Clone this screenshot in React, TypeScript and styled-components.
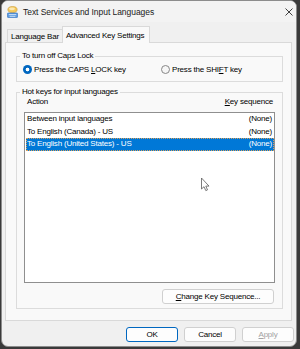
import React from "react";
import styled, { createGlobalStyle } from "styled-components";

const Global = createGlobalStyle`
  html, body { margin: 0; padding: 0; }
  body {
    width: 300px;
    height: 349px;
    overflow: hidden;
    background: #3a3a3a;
    font-family: "Liberation Sans", Arial, sans-serif;
    font-size: 8px;
    letter-spacing: -0.2px;
    color: #000;
  }
`;

const Window = styled.div`
  position: relative;
  box-sizing: border-box;
  margin-left: 1px;
  width: 296px;
  height: 347px;
  background: #f0f0f0;
  border: 1px solid #8c8c8c;
  border-radius: 7px;
  display: flex;
  flex-direction: column;
  overflow: hidden;
`;

const TitleBar = styled.div`
  height: 21px;
  display: flex;
  align-items: center;
  gap: 5px;
  padding: 0 3px 0 5px;
  background: #f3f3f3;
`;

const Title = styled.span`
  font-size: 8.5px;
  letter-spacing: -0.05px;
  color: #1a1a1a;
`;

const CloseBox = styled.div`
  margin-left: auto;
  width: 8px;
  height: 8px;
  display: flex;
`;

const TabStrip = styled.div`
  height: 20px;
  display: flex;
  align-items: flex-end;
  padding-left: 5px;
  background: #f0f0f0;
`;

const Tab = styled.div<{ $active?: boolean }>`
  position: relative;
  z-index: ${(p) => (p.$active ? 2 : 1)};
  box-sizing: border-box;
  height: ${(p) => (p.$active ? 17 : 13)}px;
  margin-bottom: ${(p) => (p.$active ? -1 : 0)}px;
  margin-left: ${(p) => (p.$active ? -1 : 0)}px;
  padding: 0 ${(p) => (p.$active ? 5 : 3)}px 0 ${(p) => (p.$active ? 3 : 3)}px;
  display: flex;
  align-items: center;
  border: 1px solid #d9d9d9;
  border-bottom: none;
  background: ${(p) => (p.$active ? "#f9f9f9" : "#f0f0f0")};
  color: #000;
`;

const Panel = styled.div`
  position: relative;
  z-index: 1;
  box-sizing: border-box;
  margin-left: 3px;
  width: 287px;
  height: 279px;
  border: 1px solid #d9d9d9;
  background: #f9f9f9;
  padding: 8px 8px 0 10px;
  display: flex;
  flex-direction: column;
  gap: 5px;
`;

const Group = styled.fieldset<{ $bottom: number }>`
  margin: 0;
  min-width: 0;
  padding: 0 3px ${(p) => p.$bottom}px 3px;
  border: 1px solid #dcdcdc;
`;

const Legend = styled.legend`
  padding: 0 2px;
  line-height: 10px;
  height: 10px;
  color: #000;
`;

const RadioRow = styled.div`
  margin-top: 2px;
  padding-left: 3px;
  height: 12px;
  display: grid;
  grid-template-columns: 138px 1fr;
  align-items: center;
`;

const RadioItem = styled.label`
  display: flex;
  align-items: center;
  gap: 2px;
`;

const RadioDot = styled.span<{ $checked?: boolean }>`
  box-sizing: border-box;
  width: 9px;
  height: 9px;
  border-radius: 50%;
  flex: none;
  ${(p) =>
    p.$checked
      ? `background: radial-gradient(circle, #ffffff 0 1.5px, #0067c0 2.2px);`
      : `background: #f6f6f6; border: 1px solid #878787;`}
`;

const Acc = styled.span`
  text-decoration: underline;
  text-decoration-thickness: 1px;
  text-underline-offset: 1px;
`;

const Hotkeys = styled.div`
  padding: 0 4px;
  display: flex;
  flex-direction: column;
`;

const Header = styled.div`
  height: 15px;
  display: flex;
  justify-content: space-between;
  align-items: flex-start;
  padding: 0 2px 0 3px;
  line-height: 10px;
`;

const ListBox = styled.div`
  box-sizing: border-box;
  height: 171px;
  background: #ffffff;
  border: 1px solid #8f8f8f;
  display: flex;
  flex-direction: column;
`;

const ListRow = styled.div<{ $selected?: boolean }>`
  box-sizing: border-box;
  height: 12.5px;
  line-height: 12.5px;
  margin-left: 1px;
  padding: 0 2px 0 1px;
  display: flex;
  justify-content: space-between;
  background: ${(p) => (p.$selected ? "#0078d7" : "transparent")};
  color: ${(p) => (p.$selected ? "#ffffff" : "#000")};
  outline: ${(p) => (p.$selected ? "1px dotted #d9a05b" : "none")};
  outline-offset: -1px;
`;

const ChangeRow = styled.div`
  margin-top: 6px;
  display: flex;
  justify-content: flex-end;
  padding-right: 1px;
`;

const Button = styled.button<{ $default?: boolean; $width: number }>`
  box-sizing: border-box;
  width: ${(p) => p.$width}px;
  height: 15px;
  padding: 0;
  margin: 0;
  font: inherit;
  letter-spacing: inherit;
  background: #fdfdfd;
  border: 1px solid ${(p) => (p.$default ? "#0067c0" : "#d0d0d0")};
  border-radius: 3px;
  color: ${(p) => (p.disabled ? "#a3a3a3" : "#000")};
`;

const Footer = styled.div`
  display: flex;
  justify-content: flex-end;
  gap: 6px;
  padding: 6px 2px 0 0;
`;

const Cursor = styled.svg`
  position: absolute;
  left: 198px;
  top: 176px;
  z-index: 5;
`;

const AppIcon = () => (
  <svg width="11" height="12" viewBox="0 0 11 12">
    <ellipse cx="5.5" cy="3.6" rx="4.6" ry="3.1" fill="#f4c95a" stroke="#c99a35" strokeWidth="0.6" />
    <ellipse cx="5" cy="2.8" rx="3" ry="1.4" fill="#fbe8b2" />
    <rect x="0.5" y="7" width="10" height="4.5" rx="0.6" fill="#5b9be0" stroke="#2f6fbf" strokeWidth="0.6" />
    <rect x="1.8" y="8.2" width="7.4" height="0.9" fill="#d8e8fa" />
    <rect x="2.6" y="9.9" width="5.8" height="0.8" fill="#d8e8fa" />
  </svg>
);

export default function App() {
  return (
    <>
      <Global />
      <Window>
        <TitleBar>
          <AppIcon />
          <Title>Text Services and Input Languages</Title>
          <CloseBox>
            <svg width="8" height="8" viewBox="0 0 8 8">
              <path d="M0.5 0.5 L7.5 7.5 M7.5 0.5 L0.5 7.5" stroke="#2b2b2b" strokeWidth="0.9" />
            </svg>
          </CloseBox>
        </TitleBar>
        <TabStrip>
          <Tab>Language Bar</Tab>
          <Tab $active>Advanced Key Settings</Tab>
        </TabStrip>
        <Panel>
          <Group $bottom={6}>
            <Legend>To turn off Caps Lock</Legend>
            <RadioRow>
              <RadioItem>
                <RadioDot $checked />
                <span>
                  Press the CAPS <Acc>L</Acc>OCK key
                </span>
              </RadioItem>
              <RadioItem>
                <RadioDot />
                <span>
                  Press the SHI<Acc>F</Acc>T key
                </span>
              </RadioItem>
            </RadioRow>
          </Group>
          <Group $bottom={4}>
            <Legend>Hot keys for input languages</Legend>
            <Hotkeys>
              <Header>
                <span>Action</span>
                <span>
                  <Acc>K</Acc>ey sequence
                </span>
              </Header>
              <ListBox>
                <ListRow>
                  <span>Between input languages</span>
                  <span>(None)</span>
                </ListRow>
                <ListRow>
                  <span>To English (Canada) - US</span>
                  <span>(None)</span>
                </ListRow>
                <ListRow $selected>
                  <span>To English (United States) - US</span>
                  <span>(None)</span>
                </ListRow>
              </ListBox>
              <ChangeRow>
                <Button $width={112}>
                  <Acc>C</Acc>hange Key Sequence...
                </Button>
              </ChangeRow>
            </Hotkeys>
          </Group>
        </Panel>
        <Footer>
          <Button $default $width={52}>OK</Button>
          <Button $width={52}>Cancel</Button>
          <Button $width={52} disabled>
            <Acc>A</Acc>pply
          </Button>
        </Footer>
        <Cursor width="11" height="15" viewBox="0 0 11 15">
          <path
            d="M1.5 1 L1.5 12 L4 9.7 L5.8 13.6 L7.5 12.9 L5.8 9.1 L9 9.1 Z"
            fill="#ffffff"
            stroke="#5a5a5a"
            strokeWidth="0.8"
            strokeLinejoin="round"
          />
        </Cursor>
      </Window>
    </>
  );
}
